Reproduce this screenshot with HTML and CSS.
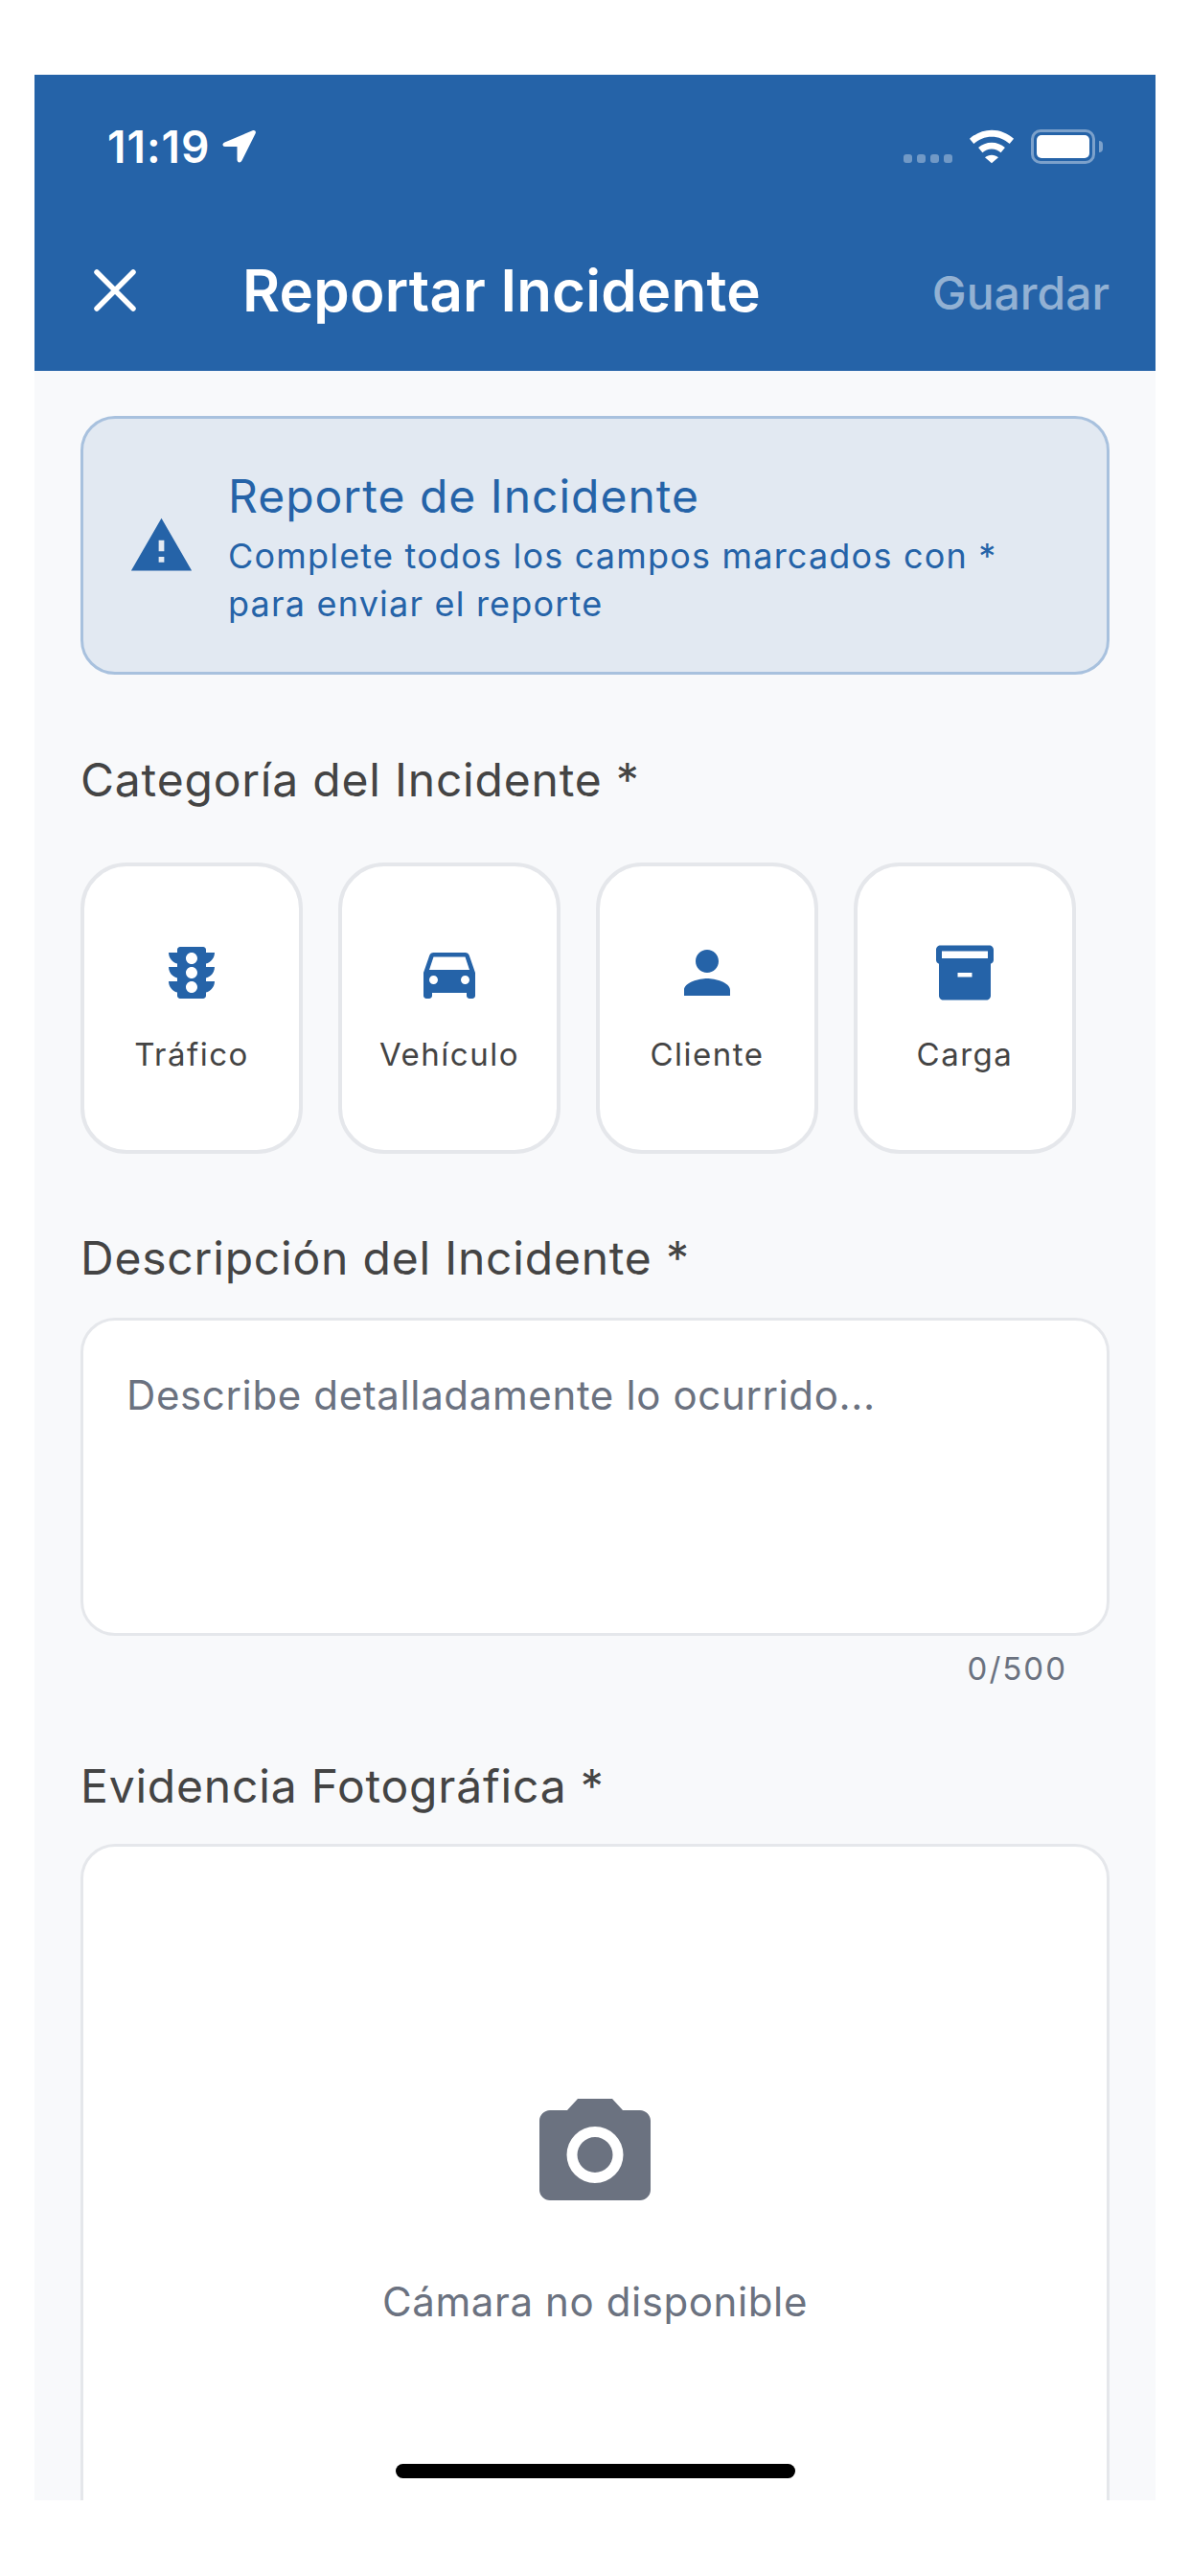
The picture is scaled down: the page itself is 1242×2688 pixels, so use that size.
FILE: index.html
```html
<!DOCTYPE html>
<html>

<head>
    <title>Reportar Incidente</title>
    <link rel="stylesheet" href="styles.css">
</head>

<body>
    <div class="phone">
        <div class="top">
            <div class="status">
                <div class="status-left">
                    <span class="time">11:19</span>
                    <svg class="arrow" viewBox="0 0 36 36"><path d="M31.5 1.2 2.5 13.5C-.5 14.800 0 18 3 18H15.500V31.500C15.500 34.800 19 35.500 20.500 32.500L34.500 4.500C35.800 2 33.800.3 31.500 1.200z" fill="#fff"/></svg>
                </div>
                <div class="status-right">
                    <div class="signal"><i></i><i></i><i></i><i></i></div>
                    <svg class="wifi" viewBox="0 0 50 36"><path d="M25 0C16 0 7.500 3.500 1 9.500L5.500 15C11 10 17.500 7.200 25 7.200S39 10 44.500 15L49 9.500C42.500 3.500 34 0 25 0zM25 13.500c-5.500 0-10.500 2-14.500 5.500l4.500 5.500c2.700-2.300 6.200-3.800 10-3.800s7.300 1.500 10 3.800l4.500-5.500c-4-3.500-9-5.500-14.500-5.500zM25 27c-2.800 0-5.300 1-7.300 2.700L25 36l7.300-6.300C30.300 28 27.800 27 25 27z" fill="#fff"/></svg>
                    <div class="battery"><div class="battery-fill"></div></div>
                    <div class="battery-tip"></div>
                </div>
            </div>
            <div class="navbar">
                <svg class="close" viewBox="0 0 44 44"><path d="M3 3 41 41M41 3 3 41" stroke="#fff" stroke-width="5.5" stroke-linecap="round"/></svg>
                <div class="nav-title">Reportar Incidente</div>
                <div class="nav-save">Guardar</div>
            </div>
        </div>

        <div class="content">
            <div class="banner">
                <svg class="banner-icon" viewBox="0 0 24 24"><path d="M1 21h22L12 2 1 21zm12-3h-2v-2h2v2zm0-4h-2v-4h2v4z" fill="#2563a8"/></svg>
                <div class="banner-body">
                    <div class="banner-title">Reporte de Incidente</div>
                    <div class="banner-text">Complete todos los campos marcados con *<br>para enviar el reporte</div>
                </div>
            </div>

            <div class="label label-first">Categoría del Incidente *</div>
            <div class="cards">
                <div class="card">
                    <svg class="card-icon" viewBox="0 0 24 24"><path d="M20 10h-3V8.860c1.720-.45 3-2 3-3.860h-3V4c0-.55-.45-1-1-1H8c-.55 0-1 .45-1 1v1H4c0 1.860 1.280 3.410 3 3.860V10H4c0 1.860 1.280 3.410 3 3.860V15H4c0 1.860 1.280 3.410 3 3.860V20c0 .55.45 1 1 1h8c.55 0 1-.45 1-1v-1.140c1.720-.45 3-2 3-3.860h-3v-1.140c1.720-.45 3-2 3-3.860zm-8 9c-1.110 0-2-.9-2-2s.89-2 2-2c1.100 0 2 .9 2 2s-.89 2-2 2zm0-5c-1.110 0-2-.9-2-2s.89-2 2-2c1.100 0 2 .9 2 2s-.89 2-2 2zm0-5c-1.110 0-2-.9-2-2 0-1.110.89-2 2-2 1.100 0 2 .89 2 2 0 1.100-.89 2-2 2z"/></svg>
                    <div class="card-name">Tráfico</div>
                </div>
                <div class="card">
                    <svg class="card-icon" viewBox="0 0 24 24"><path d="M18.920 6.010C18.720 5.420 18.160 5 17.500 5h-11c-.66 0-1.210.42-1.420 1.010L3 12v8c0 .55.45 1 1 1h1c.55 0 1-.45 1-1v-1h12v1c0 .55.45 1 1 1h1c.55 0 1-.45 1-1v-8l-2.080-5.990zM6.500 16c-.83 0-1.500-.67-1.500-1.500S5.670 13 6.500 13s1.500.67 1.500 1.500S7.330 16 6.500 16zm11 0c-.83 0-1.500-.67-1.500-1.500s.67-1.500 1.500-1.500 1.500.67 1.500 1.500-.67 1.500-1.500 1.500zM5 11l1.500-4.500h11L19 11H5z"/></svg>
                    <div class="card-name">Vehículo</div>
                </div>
                <div class="card">
                    <svg class="card-icon" viewBox="0 0 24 24"><path d="M12 12c2.210 0 4-1.790 4-4s-1.790-4-4-4-4 1.790-4 4 1.790 4 4 4zm0 2c-2.670 0-8 1.340-8 4v2h16v-2c0-2.660-5.330-4-8-4z"/></svg>
                    <div class="card-name">Cliente</div>
                </div>
                <div class="card">
                    <svg class="card-icon" viewBox="0 0 24 24"><path fill-rule="evenodd" d="M3.500 2.500h17c.8 0 1.500.7 1.500 1.500v3.500c0 .7-.4 1.200-1 1.400V20c0 .8-.7 1.500-1.500 1.500h-15c-.8 0-1.500-.7-1.500-1.500V8.900c-.6-.2-1-.7-1-1.400V4c0-.8.7-1.500 1.500-1.500zM4 4.500V7h16V4.500H4zM9.500 12v1.500h5V12h-5z"/></svg>
                    <div class="card-name">Carga</div>
                </div>
            </div>

            <div class="label label-desc">Descripción del Incidente *</div>
            <div class="textbox">Describe detalladamente lo ocurrido...</div>
            <div class="counter">0/500</div>

            <div class="label label-photo">Evidencia Fotográfica *</div>
            <div class="photo">
                <svg class="camera" viewBox="0 0 116 106"><path fill-rule="evenodd" d="M40 0h36l11 12h18c6 0 11 5 11 11v72c0 6-5 11-11 11H11c-6 0-11-5-11-11V23c0-6 5-11 11-11h18L40 0zM58 29a29.500 29.500 0 1 0 0 59 29.500 29.500 0 0 0 0-59zm0 11a18.500 18.500 0 1 1 0 37 18.500 18.500 0 0 1 0-37z" fill="#6b7280"/></svg>
                <div class="photo-text">Cámara no disponible</div>
            </div>
        </div>

        <div class="home-bar"></div>
    </div>
</body>

</html>
```

FILE: styles.css
```css
* {
    box-sizing: border-box;
}

html,
body {
    margin: 0;
    background-color: #ffffff;
}

body {
    padding: 78px 36px 0;
    font-family: Inter, "Liberation Sans", sans-serif;
}

.phone {
    position: relative;
    height: 2531px;
    overflow: hidden;
    background-color: #f8f9fb;
    display: flex;
    flex-direction: column;
}

.top {
    background-color: #2563a8;
    height: 309px;
    flex-shrink: 0;
}

.status {
    height: 141px;
    padding: 9px 55px 0 76px;
    display: flex;
    justify-content: space-between;
    align-items: center;
}

.status-left {
    display: flex;
    align-items: center;
    gap: 13px;
}

.time {
    color: #fff;
    font-size: 46px;
    font-weight: 600;
    letter-spacing: 1px;
}

.arrow {
    width: 36px;
    height: 36px;
}

.status-right {
    display: flex;
    align-items: center;
}

.signal {
    display: flex;
    gap: 5px;
    margin-top: 25px;
    margin-right: 17px;
}

.signal i {
    width: 9px;
    height: 9px;
    border-radius: 3px;
    background-color: rgba(255, 255, 255, 0.35);
}

.wifi {
    width: 48px;
    height: 36px;
    margin-right: 17px;
}

.battery {
    width: 67px;
    height: 36px;
    border: 3px solid rgba(255, 255, 255, 0.4);
    border-radius: 10px;
    padding: 3px;
}

.battery-fill {
    height: 100%;
    background-color: #fff;
    border-radius: 5px;
}

.battery-tip {
    width: 4px;
    height: 12px;
    margin-left: 4px;
    background-color: rgba(255, 255, 255, 0.4);
    border-radius: 0 4px 4px 0;
}

.navbar {
    height: 168px;
    padding: 0 48px 0 62px;
    display: flex;
    align-items: center;
}

.close {
    width: 44px;
    height: 44px;
}

.nav-title {
    margin-left: 111px;
    color: #fff;
    font-size: 60px;
    font-weight: 600;
    letter-spacing: 0.2px;
}

.nav-save {
    margin-left: auto;
    margin-top: 4px;
    color: rgba(255, 255, 255, 0.5);
    font-size: 48px;
    font-weight: 500;
}

.content {
    padding: 47px 48px 0;
}

.banner {
    height: 270px;
    padding: 0 45px 0 47px;
    display: flex;
    align-items: center;
    gap: 35px;
    background-color: #e2e9f2;
    border: 3px solid #a8c1de;
    border-radius: 36px;
}

.banner-icon {
    width: 69px;
    height: 69px;
    flex-shrink: 0;
}

.banner-body {
    padding-top: 5px;
}

.banner-title {
    color: #2563a8;
    font-size: 48px;
    font-weight: 400;
    line-height: 58px;
    letter-spacing: 1px;
    margin-bottom: 8px;
}

.banner-text {
    color: #2563a8;
    font-size: 36px;
    line-height: 50px;
    letter-spacing: 1.2px;
}

.label {
    color: #444;
    font-size: 48px;
    font-weight: 400;
    line-height: 58px;
    letter-spacing: 0.8px;
}

.label-first {
    margin-top: 81px;
}

.label-desc {
    margin-top: 80px;
}

.label-photo {
    margin-top: 72px;
}

.cards {
    margin-top: 57px;
    display: flex;
    gap: 37px;
}

.card {
    width: 232px;
    height: 304px;
    padding-top: 75px;
    display: flex;
    flex-direction: column;
    align-items: center;
    background-color: #fff;
    border: 4.5px solid #e5e7eb;
    border-radius: 48px;
}

.card-icon {
    width: 72px;
    height: 72px;
    fill: #2563a8;
}

.card-name {
    margin-top: 27px;
    color: #444;
    font-size: 33px;
    line-height: 44px;
    letter-spacing: 1.5px;
}

.textbox {
    margin-top: 33px;
    height: 332px;
    padding: 51px 45px;
    background-color: #fff;
    border: 3px solid #e5e7eb;
    border-radius: 36px;
    color: #6b7280;
    font-size: 42px;
    line-height: 54px;
    letter-spacing: 0.63px;
}

.counter {
    margin-top: 12px;
    padding-right: 44px;
    text-align: right;
    color: #6b7280;
    font-size: 33px;
    line-height: 44px;
    letter-spacing: 2px;
}

.photo {
    margin-top: 31px;
    height: 900px;
    padding-top: 263px;
    display: flex;
    flex-direction: column;
    align-items: center;
    background-color: #fff;
    border: 3px solid #e5e7eb;
    border-radius: 36px;
}

.camera {
    width: 116px;
    height: 106px;
}

.photo-text {
    margin-top: 81px;
    color: #6b7280;
    font-size: 42px;
    line-height: 50px;
    letter-spacing: 0.6px;
}

.home-bar {
    position: absolute;
    left: 377px;
    bottom: 23px;
    width: 417px;
    height: 15px;
    background-color: #000;
    border-radius: 8px;
}
```
